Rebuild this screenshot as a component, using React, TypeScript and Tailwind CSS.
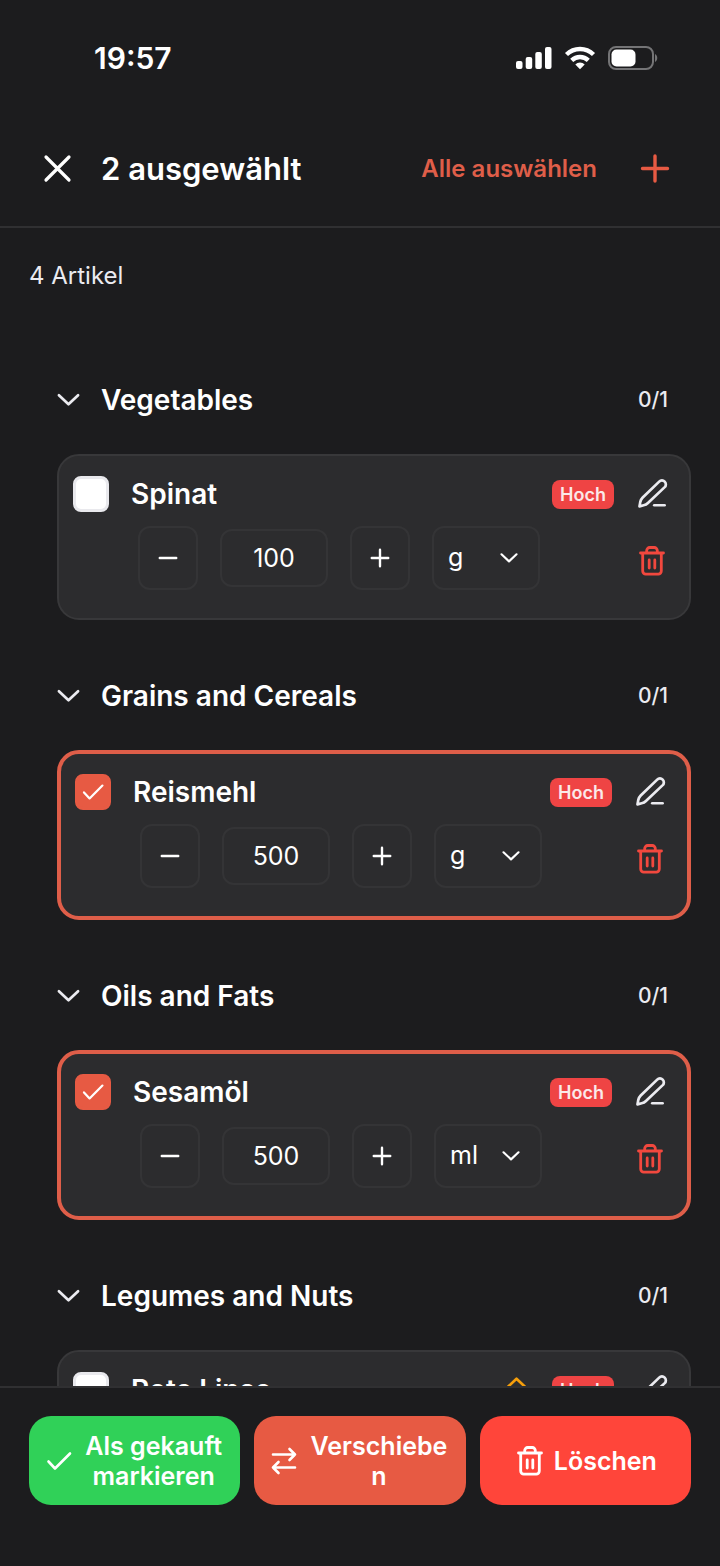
import { useState } from "react";

type Item = {
  id: number;
  category: string;
  name: string;
  amount: number;
  unit: string;
  selected: boolean;
  urgent?: boolean;
};

const initialItems: Item[] = [
  { id: 1, category: "Vegetables", name: "Spinat", amount: 100, unit: "g", selected: false },
  { id: 2, category: "Grains and Cereals", name: "Reismehl", amount: 500, unit: "g", selected: true },
  { id: 3, category: "Oils and Fats", name: "Sesamöl", amount: 500, unit: "ml", selected: true },
  { id: 4, category: "Legumes and Nuts", name: "Rote Linse", amount: 250, unit: "g", selected: false, urgent: true },
];

const ChevronIcon = ({ className }: { className: string }) => (
  <svg className={className} viewBox="0 0 24 14" fill="none" stroke="currentColor" strokeWidth={2.8} strokeLinecap="round" strokeLinejoin="round">
    <path d="M2 2l10 9.500L22 2" />
  </svg>
);

const CheckIcon = ({ className }: { className: string }) => (
  <svg className={className} viewBox="0 0 28 28" fill="none" stroke="currentColor" strokeWidth={2.6} strokeLinecap="round" strokeLinejoin="round">
    <path d="M3.500 14.500l6.500 7L25 6.500" />
  </svg>
);

const TrashIcon = ({ className }: { className: string }) => (
  <svg className={className} viewBox="0 0 32 32" fill="none" stroke="currentColor" strokeWidth={2.8} strokeLinecap="round" strokeLinejoin="round">
    <path d="M4.500 8h23M10.700 7.500V5.500a3 3 0 0 1 3-3h4.600a3 3 0 0 1 3 3v2" />
    <path d="M6.700 8.500v17.600a3 3 0 0 0 3 3h12.600a3 3 0 0 0 3-3V8.500" />
    <path d="M13.200 15v8M18.800 15v8" />
  </svg>
);

const PencilIcon = ({ className }: { className: string }) => (
  <svg className={className} viewBox="0 0 32 32" fill="none" stroke="currentColor" strokeWidth={2.8} strokeLinecap="round" strokeLinejoin="round">
    <path d="M22.900 2.700a4 4 0 0 1 5.700 5.700L11.300 24.700c-1.300 1.300-2.700 2-4.400 2.400l-4.300 1.100.8-4.600c.4-1.900 1.200-3.200 2.500-4.500z" />
    <path d="M17.800 27.100h10.700" />
  </svg>
);

const StatusBar = () => (
  <div className="flex items-center justify-between pt-[38px] pl-[94px] pr-[62px] h-[78px] text-white">
    <span className="text-[30px] leading-[38px] font-semibold">19:57</span>
    <div className="flex items-center gap-3">
      <svg className="w-9 h-6" viewBox="0 0 36 24" fill="currentColor">
        <rect x="0" y="15" width="6.500" height="8" rx="2" />
        <rect x="9.700" y="11" width="6.500" height="12" rx="2" />
        <rect x="19.300" y="6" width="6.500" height="17" rx="2" />
        <rect x="29" y="1" width="6.500" height="22" rx="2" />
      </svg>
      <svg className="w-8 h-6" viewBox="0 0 32 24" fill="none" stroke="currentColor" strokeWidth={4.4}>
        <path d="M2.500 8.500a19.500 19.500 0 0 1 27 0" />
        <path d="M7.700 14.300a12 12 0 0 1 16.600 0" />
        <path d="M16 23.300l-4.700-4.800a6.800 6.800 0 0 1 9.400 0z" fill="currentColor" stroke="none" />
      </svg>
      <svg className="w-[50px] h-6" viewBox="0 0 50 24" fill="none">
        <rect x="1" y="1" width="44" height="22" rx="7" stroke="#747476" strokeWidth={2} />
        <rect x="3.500" y="3.500" width="24" height="17" rx="5" fill="white" />
        <path d="M47 8c3 1.500 3 6.500 0 8z" fill="#747476" />
      </svg>
    </div>
  </div>
);

type CardProps = {
  item: Item;
  onChange: (patch: Partial<Item>) => void;
  onRemove: () => void;
};

const ItemCard = ({ item, onChange, onRemove }: CardProps) => (
  <div
    className={`rounded-[22px] bg-[#2c2c2e] px-3.5 pt-3.5 pb-[22px] ${
      item.selected ? "border-4 border-[#df5e49]" : "border-2 border-[#38383a]"
    }`}
  >
    <div className="flex items-center h-12">
      <label className="flex items-center flex-1 min-w-0 gap-[22px] text-[28px] leading-9 font-semibold text-white">
        <span className="grid shrink-0 place-items-center">
          <input
            type="checkbox"
            checked={item.selected}
            onChange={(e) => onChange({ selected: e.target.checked })}
            className="[grid-area:1/1] appearance-none size-9 rounded-lg border-3 border-[#e9e9ed] bg-white checked:border-[#e75a43] checked:bg-[#e75a43]"
          />
          {item.selected && <CheckIcon className="[grid-area:1/1] size-6 pointer-events-none text-white" />}
        </span>
        <span className="truncate">{item.name}</span>
      </label>
      {item.urgent && (
        <span className="flex flex-col mr-6 text-[#f59e0b]">
          <ChevronIcon className="w-[23px] h-3.5 rotate-180" />
          <ChevronIcon className="w-[23px] h-3.5 rotate-180" />
        </span>
      )}
      <span className="mr-[15px] rounded-lg bg-[#ef4444] px-2 text-lg leading-[29px] font-semibold text-[#fbe9e9]">Hoch</span>
      <button aria-label="Bearbeiten" className="grid place-items-center w-[46px] h-12 text-[#ebebf0]">
        <PencilIcon className="size-[31px]" />
      </button>
    </div>
    <div className="flex items-start justify-between mt-2 pl-[65px]">
      <div className="flex items-center gap-[22px] text-white">
        <button
          aria-label="Weniger"
          onClick={() => onChange({ amount: Math.max(0, item.amount - 1) })}
          className="grid place-items-center w-[60px] h-16 rounded-xl border-2 border-[#343436]"
        >
          <svg className="size-[22px]" viewBox="0 0 24 24" stroke="currentColor" strokeWidth={2.6} strokeLinecap="round">
            <path d="M3 12h18" />
          </svg>
        </button>
        <input
          type="text"
          inputMode="numeric"
          aria-label={`Menge ${item.name}`}
          value={item.amount}
          onChange={(e) => onChange({ amount: Number(e.target.value) || 0 })}
          className="w-[108px] h-[58px] rounded-xl border-2 border-[#343436] bg-transparent text-center text-[25px]"
        />
        <button
          aria-label="Mehr"
          onClick={() => onChange({ amount: item.amount + 1 })}
          className="grid place-items-center w-[60px] h-16 rounded-xl border-2 border-[#343436]"
        >
          <svg className="size-[22px]" viewBox="0 0 24 24" stroke="currentColor" strokeWidth={2.6} strokeLinecap="round">
            <path d="M3 12h18M12 3v18" />
          </svg>
        </button>
        <div className="relative">
          <select
            aria-label={`Einheit ${item.name}`}
            value={item.unit}
            onChange={(e) => onChange({ unit: e.target.value })}
            className="block appearance-none w-[108px] h-16 pl-3.5 rounded-xl border-2 border-[#343436] bg-transparent text-[25px]"
          >
            <option>g</option>
            <option>kg</option>
            <option>ml</option>
            <option>l</option>
          </select>
          <ChevronIcon className="absolute right-[22px] top-[26px] w-[18px] h-3 pointer-events-none" />
        </div>
      </div>
      <button aria-label="Entfernen" onClick={onRemove} className="grid place-items-center w-[46px] h-[70px] text-[#f2483e]">
        <TrashIcon className="size-8" />
      </button>
    </div>
  </div>
);

const App = () => {
  const [items, setItems] = useState(initialItems);
  const selectedCount = items.filter((item) => item.selected).length;

  const updateItem = (id: number, patch: Partial<Item>) => {
    setItems(items.map((item) => (item.id === id ? { ...item, ...patch } : item)));
  };

  const selectAll = (selected: boolean) => {
    setItems(items.map((item) => ({ ...item, selected })));
  };

  return (
    <div className="h-screen flex flex-col bg-[#1c1c1e] font-['Inter',sans-serif]">
      <StatusBar />
      <header className="flex items-center h-[150px] pt-[34px] pl-10 pr-[47px] border-b-2 border-[#303032]">
        <button aria-label="Auswahl beenden" onClick={() => selectAll(false)} className="text-white">
          <svg className="size-[34px]" viewBox="0 0 34 34" stroke="currentColor" strokeWidth={3.2} strokeLinecap="round">
            <path d="M6 5l23 23M29 5L6 28" />
          </svg>
        </button>
        <h1 className="flex-1 ml-[27px] text-[31px] leading-10 font-semibold text-white">{selectedCount} ausgewählt</h1>
        <button onClick={() => selectAll(true)} className="text-2xl leading-8 font-semibold text-[#df5e49]">
          Alle auswählen
        </button>
        <button aria-label="Artikel hinzufügen" className="ml-10 text-[#e75a43]">
          <svg className="size-9" viewBox="0 0 36 36" stroke="currentColor" strokeWidth={3.4} strokeLinecap="round">
            <path d="M5.500 17.500h25M18 5v25" />
          </svg>
        </button>
      </header>

      <main className="flex-1 min-h-0 overflow-y-auto [scrollbar-width:none] pl-[57px] pr-[29px]">
        <p className="-ml-7 pt-8 text-2xl leading-8 text-[#ebebf0]">{items.length} Artikel</p>
        <div className="flex flex-col gap-[46px] pt-[78px] pb-12">
          {items.map((item) => (
            <section key={item.id}>
              <div className="flex items-center h-[60px] mb-6 pr-[23px]">
                <button className="flex items-center gap-[21px] text-[28px] font-semibold text-white">
                  <ChevronIcon className="w-[23px] h-3.5 text-[#ebebf0]" />
                  {item.category}
                </button>
                <span className="ml-auto text-[21px] font-medium text-[#ebebf0]">0/1</span>
              </div>
              <ItemCard
                item={item}
                onChange={(patch) => updateItem(item.id, patch)}
                onRemove={() => setItems(items.filter((other) => other.id !== item.id))}
              />
            </section>
          ))}
        </div>
      </main>

      <footer className="grid grid-cols-3 gap-3.5 px-[29px] pt-7 pb-[61px] border-t-2 border-[#303032] text-[25px] leading-[30px] font-semibold text-white">
        <button className="flex items-center justify-center gap-2.5 h-[89px] px-4 rounded-[22px] bg-[#30d158]">
          <CheckIcon className="size-7 shrink-0" />
          <span className="min-w-0 wrap-anywhere">Als gekauft markieren</span>
        </button>
        <button className="flex items-center justify-center gap-2.5 h-[89px] px-4 rounded-[22px] bg-[#e75a43]">
          <svg className="size-7 shrink-0" viewBox="0 0 28 28" fill="none" stroke="currentColor" strokeWidth={2.6} strokeLinecap="round" strokeLinejoin="round">
            <path d="M3 7.500h22M19.500 2l5.500 5.500-5.500 5.500M25 20.500H3M8.500 15L3 20.500 8.500 26" />
          </svg>
          <span className="min-w-0 wrap-anywhere">Verschieben</span>
        </button>
        <button className="flex items-center justify-center gap-2 h-[89px] px-4 rounded-[22px] bg-[#ff453a]">
          <TrashIcon className="size-8 shrink-0" />
          <span className="min-w-0 wrap-anywhere">Löschen</span>
        </button>
      </footer>
    </div>
  );
};

export default App;
